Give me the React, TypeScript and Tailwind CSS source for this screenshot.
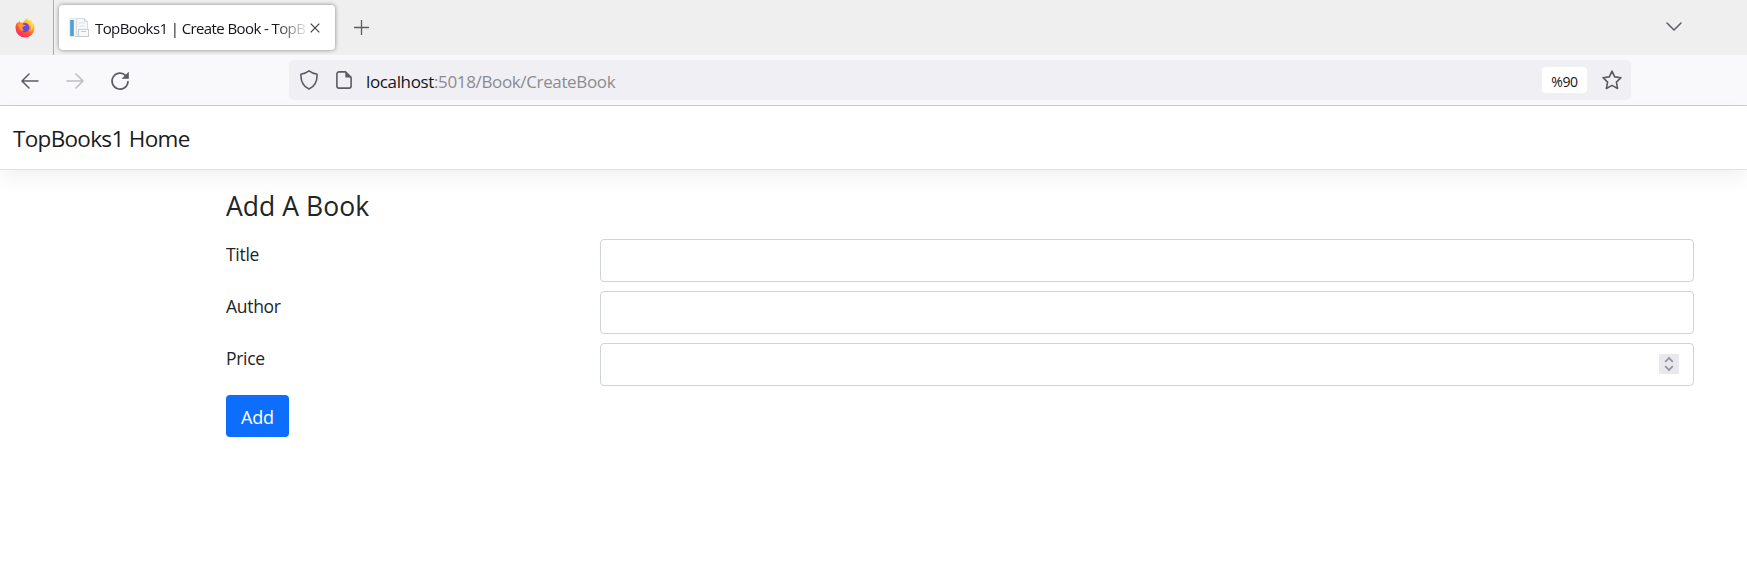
import React from "react";

function FirefoxLogo() {
  return (
    <svg width="20" height="20" viewBox="0 0 20 20">
      <defs>
        <linearGradient id="fx-body" x1="0.85" y1="0.05" x2="0.25" y2="1">
          <stop offset="0" stopColor="#fff44f" />
          <stop offset="0.3" stopColor="#ffb32b" />
          <stop offset="0.62" stopColor="#ff5634" />
          <stop offset="1" stopColor="#f5286a" />
        </linearGradient>
        <linearGradient id="fx-globe" x1="0.6" y1="0" x2="0.4" y2="1">
          <stop offset="0" stopColor="#8a3be8" />
          <stop offset="1" stopColor="#5b4fd8" />
        </linearGradient>
      </defs>
      <path
        d="M12 .3c1.2.8 2 1.900 2.400 3 .3-.5.5-1 .4-1.500 1.400 1 2.200 2.500 2.700 4 .4-.1.600-.3.700-.600.8 1.500 1.300 3 1.300 4.900a9.500 9.500 0 0 1-19 0c0-2.300.5-4.200 2-6.100.1.700.3 1 .6 1.300.2-1 .700-1.900 1.500-2.600 0 .8.300 1.500.9 1.900 1-.3 2-.3 2.900 0C9 2.900 10.200 1.300 12 .3z"
        fill="url(#fx-body)"
      />
      <circle cx="10" cy="9.600" r="4.500" fill="url(#fx-globe)" />
      <path d="M3.300 6.200c1.800-.8 3.600-.6 5 .3.700.5 1.500.600 2.300.6-.2.900-1.400 1.300-2.300 1.600-.8.400-1 1-.8 1.700.3.900.9 1.500 1.800 1.900-1.500.6-3 .5-4-.4C4.100 10.400 3.100 8.400 3.300 6.200z" fill="#ff9a26" />
      <path d="M12 .3c2.500 1.800 2.300 4.300 3.600 6.200 1.200 2 .9 5-.5 6.800 2.500-1 3.300-4.500 2.400-7.500C17 4.300 16.200 2.800 14.800 1.800c.1.500-.1 1-.4 1.500C14 2.200 13.200 1.100 12 .3z" fill="#ffe041" />
    </svg>
  );
}

function PageFavicon() {
  return (
    <svg width="20" height="20" viewBox="0 0 20 20">
      <rect x="0.500" y="0.500" width="13" height="18" fill="#f1f3f5" stroke="#e6e9eb" />
      <rect x="1.200" y="2" width="3.600" height="16" fill="#4a9fd4" />
      <path d="M7.500.5h8l3 3v13h-11z" fill="#f5f6f7" stroke="#d9dcdf" />
      <path d="M9 5h7M9 8h7" stroke="#e2e5e7" />
      <path d="M15.500.5v3h3" fill="none" stroke="#cfd4d8" />
      <rect x="9.500" y="11.500" width="10" height="7" fill="#f8f8f9" stroke="#c9ced2" />
      <path d="M12 13.500h5M6 18.500h13" stroke="#c4c9ce" />
    </svg>
  );
}

function TabStrip() {
  return (
    <div className="flex h-[55px] bg-[#efefef]">
      <div className="flex w-[54px] items-center border-r border-[#adadad] pl-[15px]">
        <FirefoxLogo />
      </div>
      <div className="mt-[5px] ml-[5px] flex h-[45px] w-[276px] items-center rounded-[4px] bg-white pl-[10px] shadow-[0_0_4px_rgba(0,0,0,0.45)]">
        <PageFavicon />
        <div className="ml-[6px] w-[214px] [mask-image:linear-gradient(to_right,black_180px,transparent_214px)]">
          <span className="block text-[15px] leading-[24px] tracking-[-0.600px] whitespace-nowrap text-[#15141a]">
            TopBooks1 | Create Book - TopB
          </span>
        </div>
        <svg className="ml-px" width="10" height="10" viewBox="0 0 10 10" fill="none" stroke="#3f3e46" strokeWidth="1.200">
          <path d="M.7.7l8.600 8.600M9.300.7L.7 9.300" />
        </svg>
      </div>
      <svg className="mt-[20px] ml-[19px]" width="15" height="15" viewBox="0 0 15 15" fill="none" stroke="#5b5b66" strokeWidth="1.300">
        <path d="M7.500 0v15M0 7.500h15" />
      </svg>
      <svg className="mt-[22px] mr-[65px] ml-auto" width="16" height="9" viewBox="0 0 16 9" fill="none" stroke="#5b5b66" strokeWidth="1.500" strokeLinecap="round" strokeLinejoin="round">
        <path d="M1 1l7 7 7-7" />
      </svg>
    </div>
  );
}

function Toolbar() {
  return (
    <div className="flex h-[51px] border-b border-[#cccccf] bg-[#f9f9fb] pt-[5px]">
      <div className="flex h-[40px] w-[289px] items-center pt-px pl-[21px]">
        <svg width="18" height="16" viewBox="0 0 18 16" fill="none" stroke="#5b5b66" strokeWidth="1.500" strokeLinecap="round" strokeLinejoin="round">
          <path d="M17 8H1M8 1L1 8l7 7" />
        </svg>
        <svg className="ml-[27px]" width="18" height="16" viewBox="0 0 18 16" fill="none" stroke="#bdbdc2" strokeWidth="1.500" strokeLinecap="round" strokeLinejoin="round">
          <path d="M1 8h16M10 1l7 7-7 7" />
        </svg>
        <svg className="ml-[26px]" width="20" height="20" viewBox="0 0 20 20" fill="none">
          <path d="M15.800 4.600A8 8 0 1 0 18 10.600" stroke="#5b5b66" strokeWidth="1.600" strokeLinecap="round" />
          <path d="M18.500 1.200v6.300h-6.300z" fill="#5b5b66" stroke="#5b5b66" strokeWidth=".6" strokeLinejoin="round" />
        </svg>
      </div>
      <div className="flex h-[40px] w-[1342px] items-center rounded-[5px] bg-[#f0f0f4] pl-[11px]">
        <svg width="18" height="20" viewBox="0 0 18 20" fill="none" stroke="#5b5b66" strokeWidth="1.600" strokeLinejoin="round">
          <path d="M9 .9c2.500 1.900 5 2.900 8.100 3.300C17.300 11.500 14.800 16.500 9 19.100 3.200 16.500.7 11.500.9 4.200 4 3.800 6.500 2.800 9 .9z" />
        </svg>
        <svg className="ml-[18px]" width="16" height="18" viewBox="0 0 16 18" fill="none">
          <path d="M9.500.9H3A2.100 2.100 0 0 0 .9 3v12A2.100 2.100 0 0 0 3 17.100h10a2.100 2.100 0 0 0 2.100-2.100V6.300z" stroke="#5b5b66" strokeWidth="1.600" strokeLinejoin="round" />
          <path d="M9.300.5v6h6z" fill="#5b5b66" />
        </svg>
        <span className="mt-[3px] ml-[14px] text-[17px] leading-[24px] tracking-[-0.360px] text-[#8b8b92]">
          <span className="text-[#15141a]">localhost</span>:5018/Book/CreateBook
        </span>
        <span className="mr-[15px] ml-auto flex h-[26px] w-[45px] items-center justify-center rounded-[4px] bg-white pt-[2px] text-[14px] tracking-[-0.400px] text-[#15141a]">
          %90
        </span>
        <svg className="mr-[9px]" width="20" height="20" viewBox="0 0 20 20" fill="none" stroke="#5b5b66" strokeWidth="1.600" strokeLinejoin="round">
          <path d="M10 1.200l2.700 5.700 6.300.8-4.600 4.400 1.200 6.400L10 15.400l-5.600 3.100 1.200-6.400L1 7.700l6.300-.8z" />
        </svg>
      </div>
    </div>
  );
}

function Field({ label, numeric = false }: { label: string; numeric?: boolean }) {
  return (
    <div className="mb-[9px] flex h-[43px]">
      <label className="w-[374px] text-[17.500px] leading-[30px] tracking-[-0.300px]">{label}</label>
      <div className="flex h-[43px] w-[1094px] items-center justify-end rounded-[4px] border border-[#ced4da] bg-white pr-[14px]">
        {numeric && (
          <span className="mb-px flex h-[20px] w-[20px] items-center justify-center bg-[#e9e9ed]">
            <svg width="10" height="16" viewBox="0 0 10 16" fill="none" stroke="#8f8f9d" strokeWidth="1.700">
              <path d="M1.200 5.800L5 2l3.800 3.800M1.200 10.200L5 14l3.800-3.800" />
            </svg>
          </span>
        )}
      </div>
    </div>
  );
}

export default function App() {
  return (
    <div className="h-[562px] w-[1747px] overflow-hidden bg-white font-['Open_Sans','Noto_Sans',sans-serif] text-[#212529]">
      <TabStrip />
      <Toolbar />
      <nav className="flex h-[64px] items-center border-b border-[#dee2e6] pl-[13px] shadow-[0_9px_18px_rgba(0,0,0,0.05)]">
        <span className="mt-[3px] text-[22.500px] tracking-[-0.680px] text-[#1b1b1b]">TopBooks1 Home</span>
      </nav>
      <main className="pt-[19px] pl-[226px]">
        <h4 className="h-[50px] text-[26.500px] leading-[35px] tracking-[0.050px]">Add A Book</h4>
        <Field label="Title" />
        <Field label="Author" />
        <Field label="Price" numeric />
        <button className="h-[42px] w-[63px] rounded-[4px] bg-[#0d6efd] pt-[2px] text-[18px] tracking-[-0.200px] text-white">Add</button>
      </main>
    </div>
  );
}
